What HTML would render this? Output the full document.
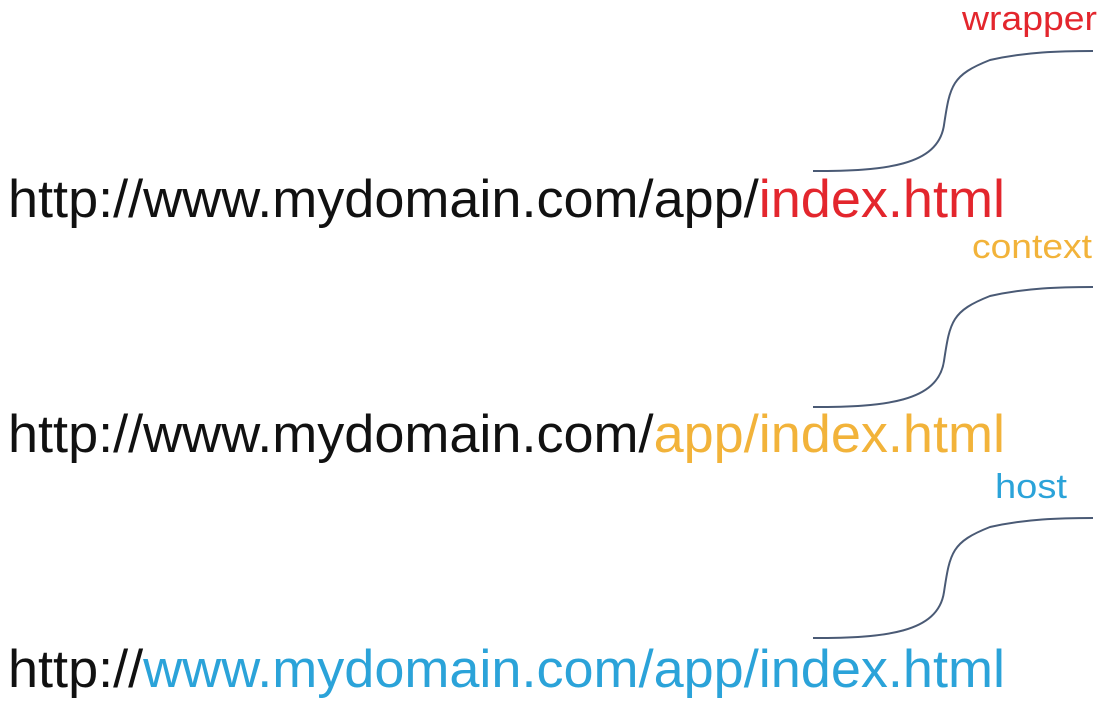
<!DOCTYPE html>
<html><head><meta charset="utf-8"><style>html,body{margin:0;padding:0;background:#fff;}svg{display:block}</style></head>
<body>
<svg width="1120" height="726" viewBox="0 0 1120 726" xmlns="http://www.w3.org/2000/svg" font-family="Liberation Sans, Arial, sans-serif">
<g fill="none" stroke="#4a5a75" stroke-width="2">
<path d="M813 171 C885 171 938 166 944 125 C950 85 952 75 990 60 C1025 52 1060 51 1093 51"/>
<path d="M813 407 C885 407 938 402 944 361 C950 321 952 311 990 296 C1025 288 1060 287 1093 287"/>
<path d="M813 638 C885 638 938 633 944 592 C950 552 952 542 990 527 C1025 519 1060 518 1093 518"/>
</g>
<text x="962" y="30" font-size="34" fill="#e3262d" textLength="135" lengthAdjust="spacingAndGlyphs">wrapper</text>
<text x="972" y="258" font-size="34" fill="#f2b33a" textLength="120" lengthAdjust="spacingAndGlyphs">context</text>
<text x="995" y="498" font-size="34" fill="#2ba3d9" textLength="72" lengthAdjust="spacingAndGlyphs">host</text>
<text x="8" y="217" font-size="53" fill="#111" textLength="997" lengthAdjust="spacingAndGlyphs">http://www.mydomain.com/app/<tspan fill="#e3262d">index.html</tspan></text>
<text x="8" y="452" font-size="53" fill="#111" textLength="997" lengthAdjust="spacingAndGlyphs">http://www.mydomain.com/<tspan fill="#f2b33a">app/index.html</tspan></text>
<text x="8" y="687" font-size="53" fill="#111" textLength="997" lengthAdjust="spacingAndGlyphs">http://<tspan fill="#2ba3d9">www.mydomain.com/app/index.html</tspan></text>
</svg>
</body></html>
